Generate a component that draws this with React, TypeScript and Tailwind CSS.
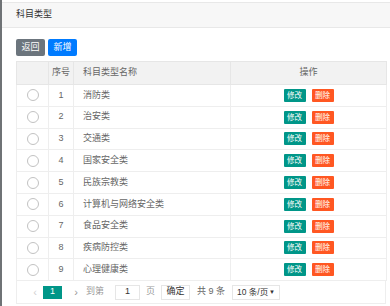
import React from "react";

const rows = [
  "消防类",
  "治安类",
  "交通类",
  "国家安全类",
  "民族宗教类",
  "计算机与网络安全类",
  "食品安全类",
  "疾病防控类",
  "心理健康类",
];

export default function App() {
  return (
    <div
      className="w-[390px] h-[306px] bg-white border-l-2 border-[#6f7376] overflow-hidden text-[#333]"
      style={{ fontFamily: '"Liberation Sans", "Noto Sans CJK SC", sans-serif' }}
    >
      <div className="mt-[2px] h-[26px] bg-[#f7f7f7] border-y border-[#e8e8e8] flex items-center pl-[14px] text-[9px] text-[#333]">
        科目类型
      </div>
      <div className="pl-[14px] pt-[11px] pr-[4px]">
        <div className="flex gap-[3px]">
          <button className="w-[29px] h-[17px] bg-[#6c757d] text-white text-[9px] rounded-[2px] flex items-center justify-center">
            返回
          </button>
          <button className="w-[29px] h-[17px] bg-[#007bff] text-white text-[9px] rounded-[2px] flex items-center justify-center">
            新增
          </button>
        </div>
        <table className="mt-[5px] w-[370px] border-collapse table-fixed text-[9px]">
          <colgroup>
            <col className="w-[32px]" />
            <col className="w-[25px]" />
            <col className="w-[157px]" />
            <col className="w-[156px]" />
          </colgroup>
          <thead>
            <tr className="h-[23px] bg-[#f2f2f2] text-[#666]">
              <th className="border border-[#e6e6e6] font-normal"></th>
              <th className="border border-[#e6e6e6] font-normal text-center">序号</th>
              <th className="border border-[#e6e6e6] font-normal text-left pl-[9px]">科目类型名称</th>
              <th className="border border-[#e6e6e6] font-normal text-center">操作</th>
            </tr>
          </thead>
          <tbody>
            {rows.map((name, i) => (
              <tr key={i} className="h-[21.8px] text-[#666]">
                <td className="border border-[#eeeeee] p-0">
                  <div className="mx-auto w-[12px] h-[12px] rounded-full border border-[#c2c2c2] bg-white" />
                </td>
                <td className="border border-[#eeeeee] text-center p-0">{i + 1}</td>
                <td className="border border-[#eeeeee] pl-[9px] py-0">{name}</td>
                <td className="border border-[#eeeeee] p-0">
                  <div className="flex justify-center gap-[6px]">
                    <span className="w-[22px] h-[13px] bg-[#009688] text-white text-[7.5px] flex items-center justify-center rounded-[1px]">
                      修改
                    </span>
                    <span className="w-[22px] h-[13px] bg-[#ff5722] text-white text-[7.5px] flex items-center justify-center rounded-[1px]">
                      删除
                    </span>
                  </div>
                </td>
              </tr>
            ))}
          </tbody>
        </table>
        <div className="w-[370px] h-[23px] border border-t-0 border-[#eeeeee] flex items-center text-[9px] text-[#666] whitespace-nowrap">
          <span className="ml-[10px] w-[16px] text-[#d2d2d2] text-[11px] text-center">‹</span>
          <span className="w-[19px] h-[13px] bg-[#009688] text-white flex items-center justify-center">1</span>
          <span className="ml-[6px] w-[16px] text-[#999] text-[11px] text-center">›</span>
          <span className="ml-[2px] text-[#999]">到第</span>
          <span className="ml-[11px] w-[25px] h-[15px] border border-[#e6e6e6] flex items-center justify-center text-[#333]">1</span>
          <span className="ml-[6px] text-[#999]">页</span>
          <span className="ml-[6px] w-[29px] h-[15px] border border-[#e6e6e6] flex items-center justify-center text-[#333]">确定</span>
          <span className="ml-[7px] text-[#666]">共 9 条</span>
          <span className="ml-[7px] w-[48px] h-[15px] border border-[#e6e6e6] flex items-center justify-between pl-[4px] pr-[4px] text-[#333]">
            <span className="text-[8.5px]">10 条/页</span>
            <span className="text-[6px]">▼</span>
          </span>
        </div>
      </div>
    </div>
  );
}
